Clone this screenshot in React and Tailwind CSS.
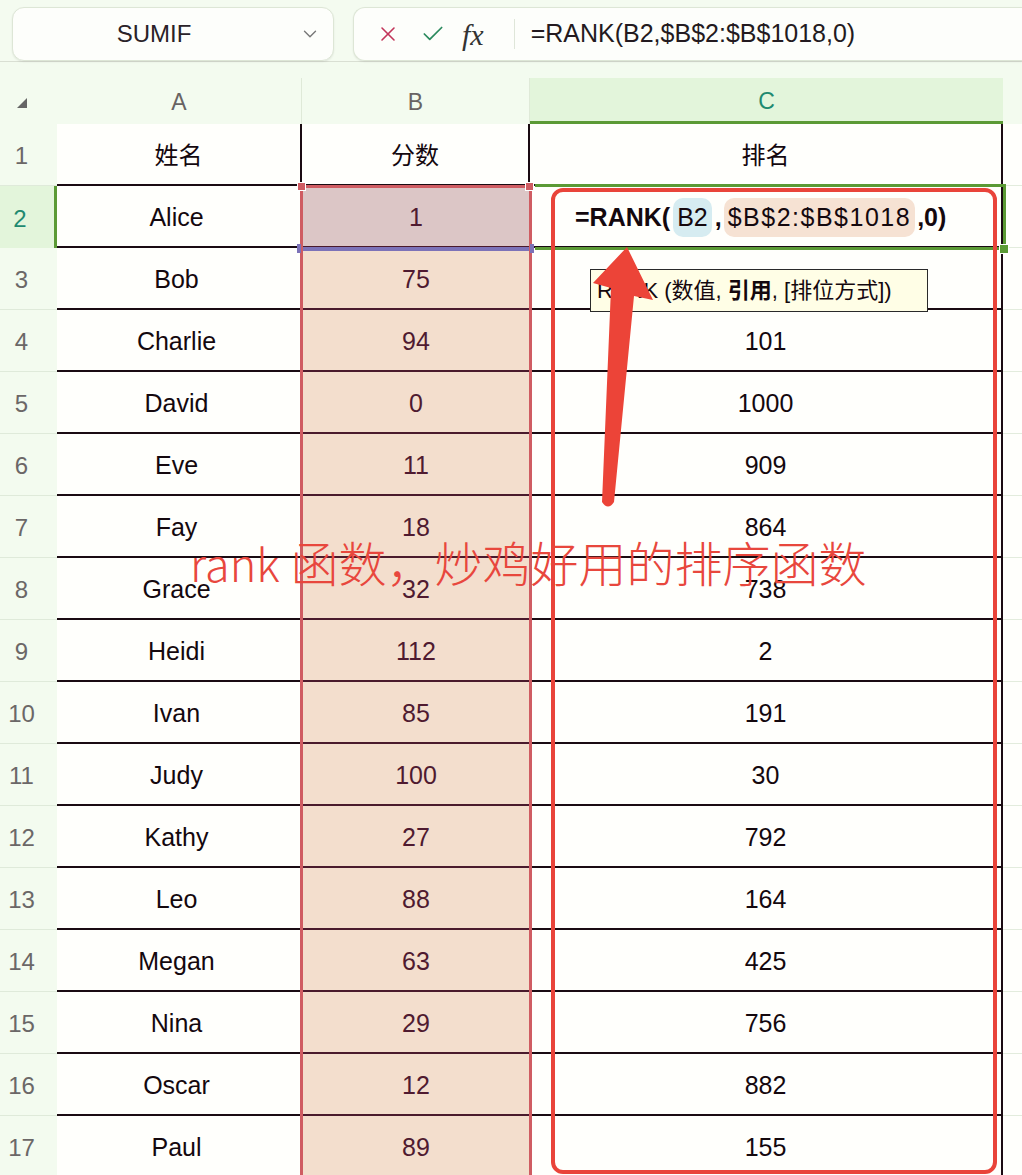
import React from "react";
import { ChevronDown, X, Check } from "lucide-react";

const FONT = { fontFamily: '"Liberation Sans", "Noto Sans CJK SC", sans-serif' };

const rows = [
  ["Alice", "1", null],
  ["Bob", "75", ""],
  ["Charlie", "94", "101"],
  ["David", "0", "1000"],
  ["Eve", "11", "909"],
  ["Fay", "18", "864"],
  ["Grace", "32", "738"],
  ["Heidi", "112", "2"],
  ["Ivan", "85", "191"],
  ["Judy", "100", "30"],
  ["Kathy", "27", "792"],
  ["Leo", "88", "164"],
  ["Megan", "63", "425"],
  ["Nina", "29", "756"],
  ["Oscar", "12", "882"],
  ["Paul", "89", "155"],
];

function FormulaCell() {
  return (
    <div className="flex items-center pl-[45px] text-[25px] text-[#14080e]">
      <span className="font-bold">=RANK(</span>
      <span className="mx-[3px] rounded-[10px] bg-[#d6ecf1] px-[4px] py-[1px]">B2</span>
      <span className="font-bold">,</span>
      <span className="mx-[2px] rounded-[10px] bg-[#f6e2d3] px-[4px] py-[1px] tracking-[1.5px]">
        $B$2:$B$1018
      </span>
      <span className="font-bold">,0)</span>
    </div>
  );
}

function TopBar() {
  return (
    <div className="flex h-[62px] border-b border-[#d9dfd3] bg-[#f4fbf0]">
      <div className="ml-[12px] mt-[7px] flex h-[54px] w-[322px] items-center rounded-[12px] border border-[#dde6d6] bg-[#fdfefb] shadow-[0_1px_2px_rgba(0,0,0,0.08)]">
        <span className="flex-1 pl-[36px] text-center text-[24px] font-medium text-[#2a2228]">SUMIF</span>
        <ChevronDown size={22} strokeWidth={1.5} className="mr-[12px] ml-[40px] text-[#777]" />
      </div>
      <div className="ml-[19px] mt-[7px] flex h-[54px] flex-1 items-center rounded-l-[12px] border border-r-0 border-[#dde6d6] bg-[#fdfefb] shadow-[0_1px_2px_rgba(0,0,0,0.08)]">
        <X size={24} strokeWidth={1.6} className="ml-[22px] text-[#c2355a]" />
        <Check size={26} strokeWidth={1.6} className="ml-[20px] text-[#2b8a5e]" />
        <span
          className="ml-[16px] text-[30px] italic text-[#333]"
          style={{ fontFamily: '"Liberation Serif", serif' }}
        >
          fx
        </span>
        <div className="ml-[30px] h-[30px] w-px bg-[#dfe6d9]" />
        <span className="ml-[16px] text-[25px] text-[#231a20]">=RANK(B2,$B$2:$B$1018,0)</span>
      </div>
    </div>
  );
}

function ColumnHeader() {
  return (
    <div className="mt-[16px] flex h-[46px] text-[23px] text-[#686363]">
      <div className="flex w-[57px] items-center pl-[17px] pt-[4px]">
        <div className="h-0 w-0 border-b-[10px] border-l-[10px] border-b-[#666] border-l-transparent" />
      </div>
      <div className="flex w-[245px] items-center justify-center border-r border-[#dfe9d8] pt-[3px]">A</div>
      <div className="flex w-[228px] items-center justify-center border-r border-[#dfe9d8] pt-[3px]">B</div>
      <div className="flex w-[473px] items-center justify-center border-b-[3px] border-[#5b9a35] bg-[#e3f5db] pt-[3px] text-[#1f8a70]">
        C
      </div>
      <div className="flex-1" />
    </div>
  );
}

function RowHead({ n, active }) {
  return (
    <div
      className={
        "flex w-[57px] items-center justify-center pr-[14px] pt-[3px] text-[24px] " +
        (active
          ? "border-r-[3px] border-[#5b9a35] bg-[#e3f5db] text-[#1f8a70]"
          : "border-b border-[#dfeada] text-[#6b6767]")
      }
    >
      {n}
    </div>
  );
}

export default function App() {
  return (
    <div className="relative h-[1175px] w-[1022px] overflow-hidden bg-[#f3fbef]" style={FONT}>
      <TopBar />
      <ColumnHeader />

      <div className="flex h-[62px]">
        <RowHead n={1} />
        <div className="flex w-[245px] items-center justify-center border-b-2 border-r-2 border-[#1a0b12] bg-[#fffffc] pt-[3px] text-[24px] text-[#14080e]">
          姓名
        </div>
        <div className="flex w-[228px] items-center justify-center border-b-2 border-r-2 border-[#1a0b12] bg-[#fffffc] pt-[3px] text-[24px] text-[#14080e]">
          分数
        </div>
        <div className="flex w-[473px] items-center justify-center border-b-2 border-r-2 border-[#1a0b12] bg-[#fffffc] pt-[3px] text-[24px] text-[#14080e]">
          排名
        </div>
        <div className="flex-1 border-b border-[#e3ecdd] bg-[#fffffc]" />
      </div>

      {rows.map(([name, score, rank], i) => (
        <div key={i} className="flex h-[62px]">
          <RowHead n={i + 2} active={i === 0} />
          <div className="flex w-[245px] items-center justify-center border-b-2 border-[#1a0b12] bg-[#fffffc] pr-[6px] pt-[3px] text-[25px] text-[#14080e]">
            {name}
          </div>
          <div
            className={
              "flex w-[228px] items-center justify-center border-b-2 border-[#4a1a2c] pt-[3px] text-[25px] text-[#4f1a30] " +
              (i === 0 ? "bg-[#dcc6c6]" : "bg-[#f3decd]")
            }
          >
            {score}
          </div>
          <div
            className={
              "flex w-[473px] items-center border-b-2 border-r-2 border-[#1a0b12] bg-[#fffffc] pt-[3px] text-[25px] text-[#14080e] " +
              (rank === null ? "" : "justify-center")
            }
          >
            {rank === null ? <FormulaCell /> : rank}
          </div>
          <div className="flex-1 border-b border-[#e3ecdd] bg-[#fffffc]" />
        </div>
      ))}

      {/* selected range B2:B1018 */}
      <div className="absolute bottom-0 left-[300px] top-[185px] w-[232px] border-x-[3px] border-t-[3px] border-[#cf5c62]" />
      <div className="absolute left-[297px] top-[182px] h-[9px] w-[9px] border border-white bg-[#cf5c62]" />
      <div className="absolute left-[525px] top-[182px] h-[9px] w-[9px] border border-white bg-[#cf5c62]" />
      <div className="absolute left-[303px] top-[247px] h-[4px] w-[226px] bg-[#7c72b8]" />
      <div className="absolute left-[297px] top-[244px] h-[9px] w-[4px] bg-[#7c72b8]" />
      <div className="absolute left-[530px] top-[244px] h-[9px] w-[4px] bg-[#7c72b8]" />

      {/* active cell C2 */}
      <div className="absolute left-[535px] top-[184px] h-[66px] w-[471px] border-y-[3px] border-r-[3px] border-[#5b9a35]" />
      <div className="absolute left-[999px] top-[244px] h-[10px] w-[10px] border border-white bg-[#5b9a35]" />

      {/* annotation box */}
      <div className="absolute left-[551px] top-[188px] h-[986px] w-[446px] rounded-[12px] border-4 border-[#e9443a]" />

      {/* function hint */}
      <div className="absolute left-[590px] top-[269px] h-[43px] w-[338px] whitespace-nowrap border border-[#2a2a2a] bg-[#fffee6] pl-[6px] text-[22px] leading-[41px] text-[#14080e]">
        RANK (数值, <b>引用</b>, [排位方式])
      </div>

      {/* arrow */}
      <svg className="absolute left-[590px] top-[244px]" width="70" height="268" viewBox="0 0 70 268">
        <path d="M37 3 L63 56 L44 52 L24 258 Q18 267 12 258 L21 44 L3 39 Z" fill="#ec4438" />
      </svg>

      {/* caption */}
      <div
        className="absolute left-[190px] top-[537px] whitespace-nowrap font-light leading-none text-[#e8473d]"
        style={{ fontFamily: '"Noto Sans CJK SC", "Noto Sans", sans-serif' }}
      >
        <span className="text-[45px]">rank</span>
        <span className="text-[48px]"> 函数，炒鸡好用的排序函数</span>
      </div>
    </div>
  );
}
